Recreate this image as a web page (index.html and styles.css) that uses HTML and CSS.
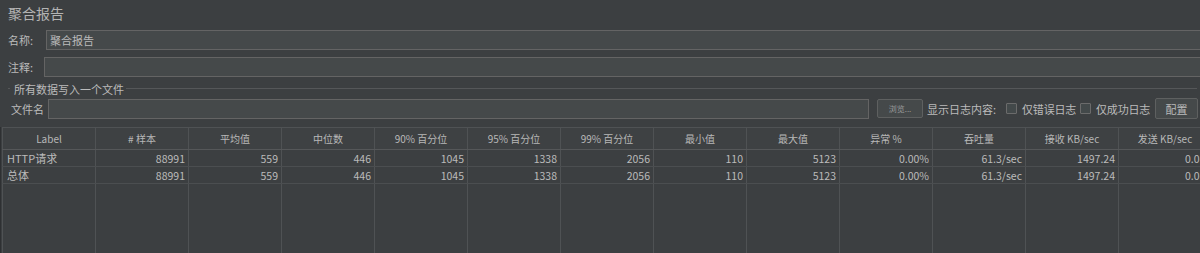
FILE: index.html
```html
<!DOCTYPE html>
<html lang="zh-CN">
<head>
  <meta charset="UTF-8" />
  <title>聚合报告</title>
  <link rel="stylesheet" href="styles.css">
</head>
<body>
  <div class="title">聚合报告</div>

  <div class="row name-row">
    <label>名称:</label>
    <input type="text" class="field" value="聚合报告" />
  </div>
  <div class="row comment-row">
    <label>注释:</label>
    <input type="text" class="field" />
  </div>

  <div class="group">
    <div class="legend"><span>所有数据写入一个文件</span></div>
    <div class="row file-row">
      <label>文件名</label>
      <input type="text" class="field file-field" />
      <button class="btn browse">浏览...</button>
      <span class="log-label">显示日志内容:</span>
      <span class="check"><i></i>仅错误日志</span>
      <span class="check"><i></i>仅成功日志</span>
      <button class="btn config">配置</button>
    </div>
  </div>

  <div class="table-wrap">
    <table class="results">
      <thead>
        <tr>
          <th>Label</th>
          <th># 样本</th>
          <th>平均值</th>
          <th>中位数</th>
          <th>90% 百分位</th>
          <th>95% 百分位</th>
          <th>99% 百分位</th>
          <th>最小值</th>
          <th>最大值</th>
          <th>异常 %</th>
          <th>吞吐量</th>
          <th>接收 KB/sec</th>
          <th>发送 KB/sec</th>
        </tr>
      </thead>
      <tbody>
        <tr>
          <td class="lbl">HTTP请求</td>
          <td>88991</td><td>559</td><td>446</td><td>1045</td><td>1338</td><td>2056</td>
          <td>110</td><td>5123</td><td>0.00%</td><td>61.3/sec</td><td>1497.24</td><td class="cut">0.0</td>
        </tr>
        <tr>
          <td class="lbl">总体</td>
          <td>88991</td><td>559</td><td>446</td><td>1045</td><td>1338</td><td>2056</td>
          <td>110</td><td>5123</td><td>0.00%</td><td>61.3/sec</td><td>1497.24</td><td class="cut">0.0</td>
        </tr>
        <tr class="filler">
          <td></td><td></td><td></td><td></td><td></td><td></td><td></td>
          <td></td><td></td><td></td><td></td><td></td><td></td>
        </tr>
      </tbody>
    </table>
  </div>
</body>
</html>
```

FILE: styles.css
```css
body {
  margin: 0;
  background: #3c3f41;
  color: #bbbbbb;
  font-family: "Noto Sans CJK SC", "Noto Sans", sans-serif;
  font-size: 11px;
  overflow: hidden;
  width: 1200px;
  height: 253px;
}
.title {
  font-size: 14px;
  line-height: 20px;
  padding: 3px 8px 0;
  height: 27px;
  box-sizing: border-box;
  color: #b4b4b4;
}
.row {
  display: flex;
  align-items: center;
  padding-left: 8px;
  margin-top: 3px;
}
.row label {
  white-space: nowrap;
  flex-shrink: 0;
}
.field {
  flex: 1;
  height: 20px;
  box-sizing: border-box;
  background: #45494a;
  border: 1px solid #646464;
  color: #bbbbbb;
  font-family: inherit;
  font-size: 11px;
  padding: 0 3px;
  outline: none;
  margin-right: -6px;
}
.name-row label { width: 38px; }
.comment-row { margin-top: 7px; }
.comment-row label { width: 36px; }

.group {
  margin-top: 4px;
}
.legend {
  position: relative;
  height: 14px;
  margin-left: 8px;
}
.legend::before {
  content: "";
  position: absolute;
  left: 0;
  right: 3px;
  top: 7px;
  border-top: 1px solid #555759;
}
.legend span {
  position: relative;
  background: #3c3f41;
  padding: 0 2px 0 4px;
  margin-left: 2px;
  line-height: 14px;
}
.file-row {
  margin-top: 3px;
  padding-left: 11px;
  white-space: nowrap;
}
.file-row > * {
  flex-shrink: 0;
}
.file-row label { width: 37px; }
.file-field {
  flex: 0 0 821px;
  margin-right: 8px;
}
.btn {
  height: 19px;
  box-sizing: border-box;
  background: #45494a;
  border: 1px solid #5e6060;
  border-radius: 2px;
  color: #bbbbbb;
  font-family: inherit;
  padding: 0;
}
.browse {
  width: 46px;
  font-size: 8px;
  color: #9a9a9a;
  margin-right: 4px;
}
.log-label {
  margin-right: 10px;
}
.check {
  display: flex;
  align-items: center;
  margin-right: 4px;
  letter-spacing: -0.2px;
}
.check + .check {
  margin-right: 5px;
}
.check i {
  display: inline-block;
  width: 11px;
  height: 11px;
  box-sizing: border-box;
  border: 1px solid #6b6b6b;
  border-radius: 1px;
  background: #43494a;
  margin-right: 5px;
}
.config {
  width: 43px;
  height: 21px;
  margin-left: 0;
  font-size: 11px;
}

.table-wrap {
  margin-top: 8px;
  border-left: 1px solid #2e3032;
}
.results {
  border-collapse: collapse;
  table-layout: fixed;
  margin-left: 1px;
  width: 1209px;
}
.results th,
.results td {
  width: 93px;
  box-sizing: border-box;
  border-left: 1px solid #4f5254;
  border-right: 1px solid #4f5254;
  white-space: nowrap;
  overflow: hidden;
}
.results th {
  height: 22px;
  padding: 0;
  font-weight: normal;
  font-size: 10px;
  text-align: center;
  color: #b8b8b8;
  border-top: 1px solid #4f5254;
  border-bottom: 1px solid #555759;
  background: #3e4143;
}
.results td {
  height: 17px;
  text-align: right;
  font-size: 10.5px;
  padding: 0 3px 0 0;
  border-bottom: 1px solid #4b4e50;
  line-height: 15px;
}
.results td.lbl {
  text-align: left;
  padding-left: 4px;
  font-size: 11px;
}
.results td.cut {
  text-align: left;
  padding-left: 66px;
}
.results tr.filler td {
  height: 71px;
  border-bottom: none;
}
```
